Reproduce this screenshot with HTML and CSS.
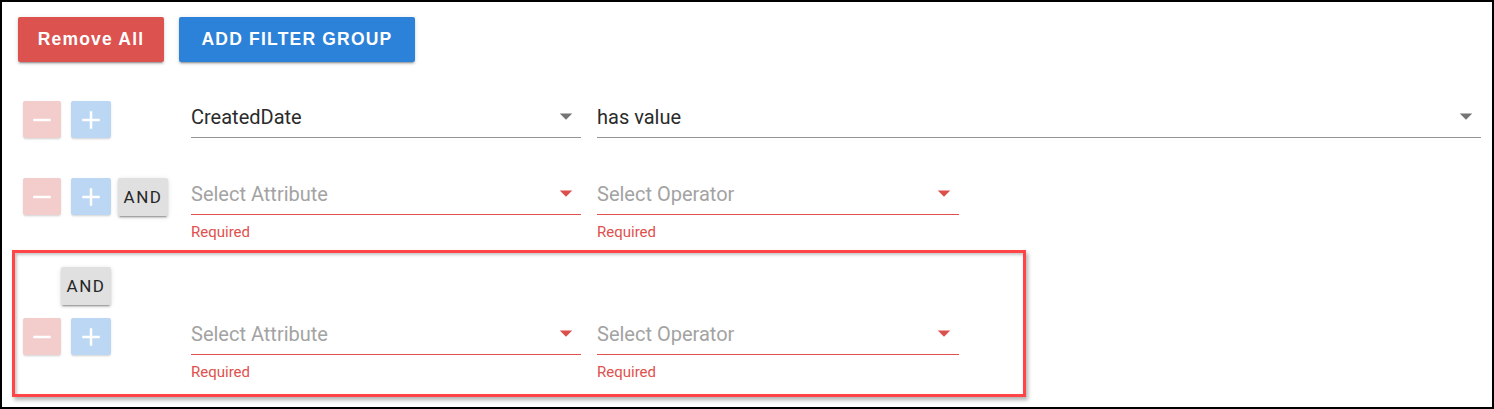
FILE: index.html
```html
<!DOCTYPE html>
<html>
<head>
<meta charset="utf-8">
<link rel="stylesheet" href="styles.css">
</head>
<body>
<div class="frame">
  <div class="toolbar">
    <button class="btn btn-red">Remove All</button>
    <button class="btn btn-blue">ADD FILTER GROUP</button>
  </div>

  <div class="row row-first">
    <div class="controls">
      <span class="sq sq-minus"><svg viewBox="0 0 24 24"><path d="M19,13H5V11H19V13Z"/></svg></span>
      <span class="sq sq-plus"><svg viewBox="0 0 24 24"><path d="M19,13H13V19H11V13H5V11H11V5H13V11H19V13Z"/></svg></span>
    </div>
    <div class="field f-attr">
      <div class="input"><span class="value">CreatedDate</span><svg class="caret" viewBox="0 0 24 24"><path d="M7,10L12,15L17,10H7Z"/></svg></div>
    </div>
    <div class="field f-op-wide">
      <div class="input"><span class="value">has value</span><svg class="caret" viewBox="0 0 24 24"><path d="M7,10L12,15L17,10H7Z"/></svg></div>
    </div>
  </div>

  <div class="row row-second">
    <div class="controls">
      <span class="sq sq-minus"><svg viewBox="0 0 24 24"><path d="M19,13H5V11H19V13Z"/></svg></span>
      <span class="sq sq-plus"><svg viewBox="0 0 24 24"><path d="M19,13H13V19H11V13H5V11H11V5H13V11H19V13Z"/></svg></span>
      <span class="and">AND</span>
    </div>
    <div class="field f-attr error">
      <div class="input"><span class="ph">Select Attribute</span><svg class="caret" viewBox="0 0 24 24"><path d="M7,10L12,15L17,10H7Z"/></svg></div>
      <div class="msg">Required</div>
    </div>
    <div class="field f-op error">
      <div class="input"><span class="ph">Select Operator</span><svg class="caret" viewBox="0 0 24 24"><path d="M7,10L12,15L17,10H7Z"/></svg></div>
      <div class="msg">Required</div>
    </div>
  </div>

  <div class="highlight">
    <span class="and and-group">AND</span>
    <div class="row row-boxed">
      <div class="controls">
        <span class="sq sq-minus"><svg viewBox="0 0 24 24"><path d="M19,13H5V11H19V13Z"/></svg></span>
        <span class="sq sq-plus"><svg viewBox="0 0 24 24"><path d="M19,13H13V19H11V13H5V11H11V5H13V11H19V13Z"/></svg></span>
      </div>
      <div class="field f-attr error">
        <div class="input"><span class="ph">Select Attribute</span><svg class="caret" viewBox="0 0 24 24"><path d="M7,10L12,15L17,10H7Z"/></svg></div>
        <div class="msg">Required</div>
      </div>
      <div class="field f-op error">
        <div class="input"><span class="ph">Select Operator</span><svg class="caret" viewBox="0 0 24 24"><path d="M7,10L12,15L17,10H7Z"/></svg></div>
        <div class="msg">Required</div>
      </div>
    </div>
  </div>
</div>
</body>
</html>
```

FILE: styles.css
```css
* { box-sizing: border-box; }
html, body { margin: 0; padding: 0; background: #fff; }
body { font-family: Roboto, "Noto Sans", Arial, sans-serif; }

.frame {
  width: 1494px;
  height: 409px;
  border: 2px solid #000;
  overflow: hidden;
}

.toolbar {
  display: flex;
  gap: 15px;
  padding: 15px 0 0 16px;
}

.btn {
  height: 45px;
  border: 0;
  border-radius: 2px;
  color: #fff;
  font-family: "Liberation Sans", Arial, sans-serif;
  font-size: 17.5px;
  font-weight: 700;
  letter-spacing: 1.2px;
  box-shadow: 0 3px 1px -2px rgba(0,0,0,.2), 0 2px 2px 0 rgba(0,0,0,.14), 0 1px 5px 0 rgba(0,0,0,.12);
  padding: 0;
}
.btn-red { width: 146px; background: #db524f; }
.btn-blue { width: 236px; background: #2c81d8; }

.row {
  display: flex;
  align-items: flex-start;
  margin-left: 21px;
}
.row-first { margin-top: 39px; }
.row-second { margin-top: 40px; }

.controls {
  width: 168px;
  flex: 0 0 168px;
  display: flex;
  align-items: flex-start;
}

.sq {
  height: 37px;
  display: flex;
  align-items: center;
  justify-content: center;
  border-radius: 2px;
  box-shadow: 0 2px 2px -1px rgba(0,0,0,.12), 0 1px 3px 0 rgba(0,0,0,.08);
}
.sq svg { width: 30px; height: 30px; fill: #fff; }
.sq-minus { width: 38px; background: #f3cccc; }
.sq-plus { width: 40px; margin-left: 10px; background: #bcd7f3; }

.and {
  width: 50px;
  height: 38px;
  margin-left: 7px;
  background: #e0e0e0;
  color: #262626;
  font-size: 17px;
  letter-spacing: 1.5px;
  display: flex;
  align-items: center;
  justify-content: center;
  border-radius: 2px;
  box-shadow: 0 3px 1px -2px rgba(0,0,0,.2), 0 2px 2px 0 rgba(0,0,0,.14), 0 1px 5px 0 rgba(0,0,0,.12);
}

.field { display: flex; flex-direction: column; }
.f-attr { width: 390px; }
.f-op-wide { width: 884px; margin-left: 16px; }
.f-op { width: 362px; margin-left: 16px; }

.input {
  height: 37px;
  border-bottom: 1px solid #949494;
  display: flex;
  align-items: flex-start;
  justify-content: space-between;
  font-size: 20px;
  line-height: 24px;
}
.input .value, .input .ph { padding-top: 4px; }
.value { color: #2b2b2b; }
.ph { color: #a3a3a3; }
.caret { width: 30px; height: 30px; fill: #757575; flex: 0 0 30px; }

.error .input { border-bottom-color: #e0514e; }
.error .caret { fill: #db4f4c; }
.msg {
  margin-top: 8px;
  font-size: 15px;
  line-height: 18px;
  color: #e0514e;
}

.highlight {
  margin: 9px 0 0 10px;
  width: 1014px;
  height: 147px;
  border: 3px solid #ff4545;
  padding: 14px 0 0 0;
  box-shadow: 2px 3px 4px rgba(0,0,0,.3), inset 2px 2px 3px rgba(0,0,0,.22);
}
.and-group { margin-left: 46px; }
.row-boxed { margin-left: 8px; margin-top: 13px; }
```
